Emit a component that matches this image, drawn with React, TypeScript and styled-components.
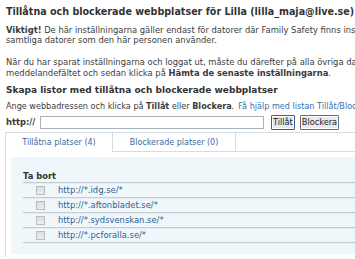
import React from 'react';
import styled, { createGlobalStyle } from 'styled-components';

const GlobalStyle = createGlobalStyle`
  html, body {
    margin: 0;
    padding: 0;
    overflow: hidden;
    background: #ffffff;
  }
  body {
    font-family: "DejaVu Sans", Verdana, sans-serif;
    color: #3b3b3b;
  }
`;

const sites = [
  'http://*.idg.se/*',
  'http://*.aftonbladet.se/*',
  'http://*.sydsvenskan.se/*',
  'http://*.pcforalla.se/*',
];

const Page = styled.div`
  width: 470px;
  padding: 3px 0 0 6px;
`;

const Title = styled.h1`
  margin: 0;
  font-family: "DejaVu Sans Condensed", "DejaVu Sans", sans-serif;
  font-size: 10.65px;
  line-height: 18px;
  font-weight: bold;
  color: #333333;
  white-space: nowrap;
`;

const Paragraph = styled.div<{ $lh: number; $top: number; $size?: number }>`
  margin-top: ${(p) => p.$top}px;
  font-size: ${(p) => p.$size ?? 8.4}px;
  line-height: ${(p) => p.$lh}px;
  white-space: nowrap;
`;

const Line = styled.div``;

const Heading = styled.h2`
  margin: 5px 0 0;
  font-size: 9px;
  line-height: 12px;
  font-weight: bold;
  color: #333333;
  white-space: nowrap;
`;

const Link = styled.a`
  color: #3a6fb0;
  text-decoration: none;
  margin-left: 4px;
`;

const FormRow = styled.div`
  display: flex;
  align-items: center;
  gap: 5px;
  margin-top: 3px;
  height: 14px;
`;

const Label = styled.span`
  font-size: 8.4px;
  font-weight: bold;
  width: 29px;
`;

const UrlInput = styled.input`
  box-sizing: border-box;
  width: 224px;
  height: 13px;
  margin: 0 2px 0 0;
  border: 1px solid #a9b1ba;
  padding: 0;
`;

const Button = styled.button<{ $primary?: boolean }>`
  box-sizing: border-box;
  height: 15px;
  padding: 0 1px;
  font-family: inherit;
  font-size: 8.2px;
  color: #222222;
  background: ${(p) => (p.$primary ? '#dcebf8' : '#e9e9ef')};
  border: 1px solid ${(p) => (p.$primary ? '#4b5e78' : '#6b6b7c')};
  box-shadow: inset 0 0 0 1px #ffffff;
  border-radius: 1px;
`;

const TabBox = styled.div`
  margin: 3px 0 0 -1px;
  border: 1px solid #d3dbe3;
  border-bottom: none;
`;

const TabStrip = styled.div`
  display: flex;
  height: 19px;
`;

const Tab = styled.div<{ $active?: boolean; $width: number }>`
  box-sizing: border-box;
  width: ${(p) => p.$width}px;
  display: flex;
  align-items: center;
  justify-content: center;
  font-size: 8px;
  color: #3d6a9c;
  border-right: 1px solid #d3dbe3;
  border-bottom: ${(p) => (p.$active ? 'none' : '1px solid #d3dbe3')};
`;

const TabFill = styled.div`
  flex: 1;
  border-bottom: 1px solid #d3dbe3;
`;

const PanelPad = styled.div`
  padding: 5px 0 3px 5px;
`;

const Panel = styled.div`
  background: #f0f7fb;
  padding: 14px 0 11px 12px;
`;

const Row = styled.div`
  display: flex;
  align-items: center;
  height: 14px;
  border-bottom: 1px solid #c5ccd2;
  box-shadow: 0 1px 0 #e4ecf2;
  font-size: 8.4px;
`;

const HeadRow = styled(Row)`
  height: 11px;
  line-height: 10px;
  align-items: flex-start;
  font-weight: bold;
  color: #333333;
`;

const Check = styled.span`
  box-sizing: border-box;
  width: 9px;
  height: 9px;
  margin: 0 13px 0 13px;
  border: 1px solid #b8bcc0;
  background: linear-gradient(#dcdcdc, #ededed);
`;

const SiteLink = styled.a`
  color: #2f5f96;
  text-decoration: none;
`;

export default function App() {
  return (
    <>
      <GlobalStyle />
      <Page>
        <Title>Tillåtna och blockerade webbplatser för Lilla (lilla_maja@live.se)</Title>
        <Paragraph $lh={10} $top={4}>
          <Line>
            <b>Viktigt!</b> De här inställningarna gäller endast för datorer där Family Safety finns installerat och på
          </Line>
          <Line>samtliga datorer som den här personen använder.</Line>
        </Paragraph>
        <Paragraph $lh={11} $top={12}>
          <Line>
            När du har sparat inställningarna och loggat ut, måste du därefter på alla övriga datorer klicka på ikonen i
          </Line>
          <Line>
            meddelandefältet och sedan klicka på <b>Hämta de senaste inställningarna</b>.
          </Line>
        </Paragraph>
        <Heading>Skapa listor med tillåtna och blockerade webbplatser</Heading>
        <Paragraph $lh={12} $top={4} $size={8.1}>
          Ange webbadressen och klicka på <b>Tillåt</b> eller <b>Blockera</b>.
          <Link href="#">Få hjälp med listan Tillåt/Blockera</Link>
        </Paragraph>
        <FormRow>
          <Label>http://</Label>
          <UrlInput type="text" />
          <Button $primary>Tillåt</Button>
          <Button>Blockera</Button>
        </FormRow>
        <TabBox>
          <TabStrip>
            <Tab $active $width={107}>Tillåtna platser (4)</Tab>
            <Tab $width={123}>Blockerade platser (0)</Tab>
            <TabFill />
          </TabStrip>
          <PanelPad>
            <Panel>
              <HeadRow>Ta bort</HeadRow>
              {sites.map((s) => (
                <Row key={s}>
                  <Check />
                  <SiteLink href="#">{s}</SiteLink>
                </Row>
              ))}
            </Panel>
          </PanelPad>
        </TabBox>
      </Page>
    </>
  );
}
